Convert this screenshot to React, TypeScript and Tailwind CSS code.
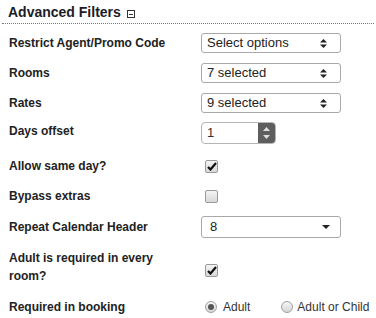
import React from 'react';

const font = { fontFamily: '"Liberation Sans", Arial, sans-serif' };

const UpDown = () => (
  <svg width="7" height="9" viewBox="0 0 7 9" className="text-[#222]">
    <path d="M3.5 0 L7 3.5 H0 Z" fill="currentColor" />
    <path d="M0 5.5 H7 L3.5 9 Z" fill="currentColor" />
  </svg>
);

const MultiSelect: React.FC<{ value: string }> = ({ value }) => (
  <div className="flex items-center justify-between w-[140px] h-[20px] border border-[#a9a9a9] rounded-[3px] bg-white pl-[5px] pr-[13px] text-[13px] font-normal text-[#222]">
    <span>{value}</span>
    <UpDown />
  </div>
);

const Check: React.FC<{ checked?: boolean }> = ({ checked }) => (
  <div className="w-[13px] h-[13px] ml-[4px] rounded-[2px] border border-[#9a9a9a] bg-gradient-to-b from-[#f4f4f4] to-[#d8d8d8] flex items-center justify-center">
    {checked && (
      <svg width="10" height="9" viewBox="0 0 10 9">
        <path d="M1 5 L3.5 7.5 L9 1" stroke="#111" strokeWidth="2.2" fill="none" />
      </svg>
    )}
  </div>
);

const Radio: React.FC<{ checked?: boolean }> = ({ checked }) => (
  <div className="w-[12px] h-[12px] shrink-0 rounded-full border border-[#a0a0a0] bg-gradient-to-b from-[#f6f6f6] to-[#d6d6d6] flex items-center justify-center">
    {checked && <div className="w-[6px] h-[6px] rounded-full bg-[#555]" />}
  </div>
);

export default function App() {
  const rows: { label: React.ReactNode; control: React.ReactNode; h: string }[] = [
    { label: 'Restrict Agent/Promo Code', control: <MultiSelect value="Select options" />, h: 'h-[30px]' },
    { label: 'Rooms', control: <MultiSelect value="7 selected" />, h: 'h-[30px]' },
    { label: 'Rates', control: <MultiSelect value="9 selected" />, h: 'h-[30px]' },
  ];

  return (
    <div className="w-[376px] h-[318px] bg-white overflow-hidden text-[#222]" style={font}>
      <div className="mx-[2px] pl-[6px] pt-[4px] h-[24px] border-b border-dotted border-[#777] flex items-start gap-[6px]">
        <span className="text-[14px] font-bold text-[#1c1c28] leading-[17px]">Advanced Filters</span>
        <span className="mt-[6px] w-[8px] h-[8px] border border-[#333] flex items-center justify-center">
          <span className="w-[4px] h-[1px] bg-[#333]" />
        </span>
      </div>

      <div className="pl-[9px] pt-[4px] text-[12px] font-bold">
        {rows.map((r, i) => (
          <div key={i} className={`flex items-center ${r.h}`}>
            <div className="w-[192px]">{r.label}</div>
            {r.control}
          </div>
        ))}

        <div className="flex items-center h-[30px]">
          <div className="w-[192px] -mt-[4px]">Days offset</div>
          <div className="flex w-[75px] h-[22px] border border-[#b5b5b5] rounded-[4px] overflow-hidden bg-white">
            <div className="flex-1 pl-[5px] text-[13px] font-normal text-[#333] flex items-center">1</div>
            <div className="w-[17px] bg-[#5e5e5e] flex flex-col items-center justify-center gap-[4px]">
              <svg width="7" height="4" viewBox="0 0 7 4"><path d="M3.5 0 L7 4 H0 Z" fill="#ddd" /></svg>
              <svg width="7" height="4" viewBox="0 0 7 4"><path d="M0 0 H7 L3.5 4 Z" fill="#ddd" /></svg>
            </div>
          </div>
        </div>

        <div className="flex items-center h-[30px] mt-[3px]">
          <div className="w-[192px]">Allow same day?</div>
          <Check checked />
        </div>

        <div className="flex items-center h-[30px]">
          <div className="w-[192px]">Bypass extras</div>
          <Check />
        </div>

        <div className="flex items-center h-[30px] mt-[1px]">
          <div className="w-[192px]">Repeat Calendar Header</div>
          <div className="flex items-center justify-between w-[140px] h-[22px] border border-[#a9a9a9] rounded-[3px] bg-white pl-[8px] pr-[10px] text-[13px] font-normal text-[#222]">
            <span>8</span>
            <svg width="8" height="4" viewBox="0 0 8 4"><path d="M0 0 H8 L4 4 Z" fill="#222" /></svg>
          </div>
        </div>

        <div className="flex items-center h-[44px] mt-[3px]">
          <div className="w-[192px] leading-[18px] pr-[40px]">Adult is required in every room?</div>
          <div className="mt-[6px]"><Check checked /></div>
        </div>

        <div className="flex items-center h-[30px] mt-[3px] whitespace-nowrap">
          <div className="w-[196px]">Required in booking</div>
          <div className="flex items-center gap-[6px] font-normal text-[12px] text-[#333]">
            <Radio checked />
            <span>Adult</span>
          </div>
          <div className="flex items-center gap-[4px] font-normal text-[12px] text-[#333] ml-[31px]">
            <Radio />
            <span>Adult or Child</span>
          </div>
        </div>
      </div>
    </div>
  );
}
